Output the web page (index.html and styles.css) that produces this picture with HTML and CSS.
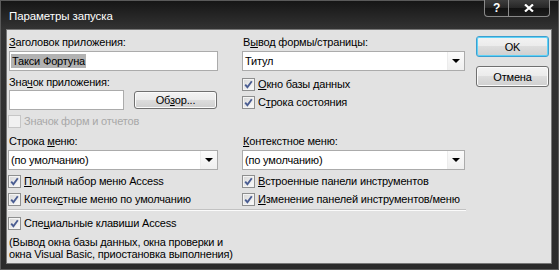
FILE: index.html
```html
<!DOCTYPE html>
<html>
  <head>
    <meta charset="UTF-8" />
    <title>Параметры запуска</title>
    <link rel="stylesheet" href="styles.css">
  </head>
  <body>
    <div class="window">
      <div class="titlebar">
        <span class="title">Параметры запуска</span>
        <div class="caption-buttons">
          <span class="cap-btn help">?</span>
          <span class="cap-btn close">
            <svg width="10" height="8" viewBox="0 0 10 8">
              <path d="M1 0.5 L9 7.5 M9 0.5 L1 7.5" stroke="#fff" stroke-width="2.2" fill="none" />
            </svg>
          </span>
        </div>
      </div>

      <div class="client">
        <div class="main">
          <div class="grid top">
            <div class="col">
              <span class="lbl"><u>З</u>аголовок приложения:</span>
              <div class="textbox"><span class="sel">Такси Фортуна</span></div>
              <span class="lbl lbl-icon">Зна<u>ч</u>ок приложения:</span>
              <div class="icon-row">
                <div class="textbox icon-box"></div>
                <button class="btn browse">Об<u>з</u>ор...</button>
              </div>
              <div class="check disabled"><span class="box"></span>Значок форм и отчетов</div>
            </div>
            <div class="col">
              <span class="lbl">В<u>ы</u>вод формы/страницы:</span>
              <div class="combo"><span class="value">Титул</span><span class="arrow"></span></div>
              <div class="check first"><span class="box checked"></span><u>О</u>кно базы данных</div>
              <div class="check"><span class="box checked"></span>С<u>т</u>рока состояния</div>
            </div>
          </div>

          <div class="grid middle">
            <div class="col">
              <span class="lbl">Строка <u>м</u>еню:</span>
              <div class="combo"><span class="value">(по умолчанию)</span><span class="arrow"></span></div>
              <div class="check first"><span class="box checked"></span><u>П</u>олный набор меню Access</div>
              <div class="check"><span class="box checked"></span>Контек<u>с</u>тные меню по умолчанию</div>
            </div>
            <div class="col">
              <span class="lbl"><u>К</u>онтекстное меню:</span>
              <div class="combo"><span class="value">(по умолчанию)</span><span class="arrow"></span></div>
              <div class="check first"><span class="box checked"></span><u>В</u>строенные панели инструментов</div>
              <div class="check"><span class="box checked"></span><u>И</u>зменение панелей инструментов/меню</div>
            </div>
          </div>

          <div class="separator"></div>
          <div class="check special"><span class="box checked"></span>Спе<u>ц</u>иальные клавиши Access</div>
          <p class="note">(Вывод окна базы данных, окна проверки и<br>окна Visual Basic, приостановка выполнения)</p>
        </div>

        <div class="buttons">
          <button class="btn ok">OK</button>
          <button class="btn cancel">Отмена</button>
        </div>
      </div>
    </div>
  </body>
</html>
```

FILE: styles.css
```css
* {
  margin: 0;
  padding: 0;
  box-sizing: border-box;
}

body {
  width: 559px;
  height: 270px;
  overflow: hidden;
  background: #1b1b1b;
  font-family: "Liberation Sans", Arial, sans-serif;
  font-size: 11px;
  letter-spacing: -0.17px;
  color: #000;
}

.window {
  width: 559px;
  height: 270px;
  display: flex;
  flex-direction: column;
  border: 1px solid #5a5a5a;
  background: linear-gradient(#161616, #333 28px, #2b2b2b);
}

/* title bar */
.titlebar {
  height: 29px;
  display: flex;
  justify-content: space-between;
  align-items: flex-start;
}
.title {
  color: #fff;
  font-size: 11.5px;
  letter-spacing: -0.1px;
  line-height: 14px;
  margin: 8px 0 0 8px;
}
.caption-buttons {
  display: flex;
  margin: -1px 8px 0 0;
}
.cap-btn {
  height: 17px;
  display: flex;
  align-items: center;
  justify-content: center;
  border: 1px solid #8a8a8a;
  border-top: none;
  background: linear-gradient(#3e3e3e, #262626 50%, #121212 52%, #1e1e1e);
  color: #fff;
  font-weight: bold;
  font-size: 12px;
}
.help {
  width: 25px;
  border-radius: 0 0 0 4px;
}
.close {
  width: 41px;
  border-left: none;
  border-radius: 0 0 4px 0;
}

/* client area */
.client {
  flex: 1;
  margin: 0 7px 6px 6px;
  padding: 5px 2px 0 1px;
  display: flex;
  background: #e2e2e2;
  box-shadow: 0 0 0 1px #777;
}
.main {
  width: 458px;
}
.grid {
  display: grid;
  grid-template-columns: 210px 223px;
  column-gap: 24px;
}
.middle {
  margin-top: 5px;
}
.col {
  display: flex;
  flex-direction: column;
  align-items: flex-start;
}

.lbl {
  display: block;
  height: 14px;
  line-height: 14px;
  padding-left: 1px;
}
.lbl-icon {
  margin-top: 4px;
}

.textbox {
  width: 209px;
  height: 20px;
  margin: 2px 0 0 1px;
  padding-left: 1px;
  line-height: 18px;
  background: #fff;
  border: 1px solid #ababab;
}
.sel {
  background: #b2b2b2;
  padding: 1px 1px;
}

.icon-row {
  display: flex;
  align-items: center;
  height: 20px;
  margin-top: 1px;
}
.icon-box {
  width: 115px;
  margin-top: 0;
}

.combo {
  width: 100%;
  height: 20px;
  margin-top: 2px;
  display: flex;
  justify-content: space-between;
  background: #fff;
  border: 1px solid #ababab;
}
.combo .value {
  line-height: 18px;
  padding-left: 2px;
}
.arrow {
  width: 17px;
  height: 18px;
  display: flex;
  align-items: center;
  justify-content: center;
  background: linear-gradient(#fbfbfb, #efefef);
  border-left: 1px solid #ececec;
}
.arrow::after {
  content: "";
  border-left: 4px solid transparent;
  border-right: 4px solid transparent;
  border-top: 4px solid #000;
}

/* checkboxes */
.check {
  display: flex;
  align-items: center;
  height: 16px;
  margin-top: 2px;
  white-space: nowrap;
}
.check.first {
  margin-top: 5px;
}
.middle .check.first {
  margin-top: 3px;
}
.col .disabled {
  margin-top: 3px;
  color: #a8a8a8;
}
.box {
  width: 13px;
  height: 13px;
  margin-right: 3px;
  border: 1px solid #8e8f8f;
  background: linear-gradient(135deg, #d6d6d6, #fdfdfd);
  box-shadow: inset 0 0 0 1px #f4f4f4;
}
.box.checked {
  background: url("data:image/svg+xml;utf8,<svg xmlns='http://www.w3.org/2000/svg' width='11' height='11'><path d='M2.2 5.6 L4.4 8.2 L8.8 2.2' stroke='%234a5d92' stroke-width='1.9' fill='none'/></svg>") center no-repeat,
    linear-gradient(135deg, #d6d6d6, #fdfdfd);
}
.disabled .box {
  border-color: #c6c6c6;
  background: #f1f1f1;
  box-shadow: none;
}

.separator {
  width: 458px;
  height: 2px;
  margin-top: 2px;
  border-top: 1px solid #c2c2c2;
  border-bottom: 1px solid #fbfbfb;
}
.special {
  margin-top: 4px;
}
.note {
  margin-top: 5px;
  padding-left: 1px;
  line-height: 12px;
}

/* push buttons */
.btn {
  font-family: "Liberation Sans", Arial, sans-serif;
  font-size: 11px;
  letter-spacing: -0.17px;
  color: #000;
  border: 1px solid #707070;
  border-radius: 3px;
  background: linear-gradient(#f3f3f3, #ebebeb 48%, #dddddd 50%, #cfcfcf);
  box-shadow: inset 0 0 0 1px #fbfbfb;
}
.browse {
  width: 83px;
  height: 18px;
  margin-left: 10px;
}
.buttons {
  margin-left: 10px;
  display: flex;
  flex-direction: column;
}
.buttons .btn {
  width: 73px;
  height: 21px;
}
.ok {
  margin-top: 1px;
  border-color: #3c9fd0;
  box-shadow: inset 0 0 0 1px #5fd2f6;
}
.cancel {
  margin-top: 9px;
}
```
